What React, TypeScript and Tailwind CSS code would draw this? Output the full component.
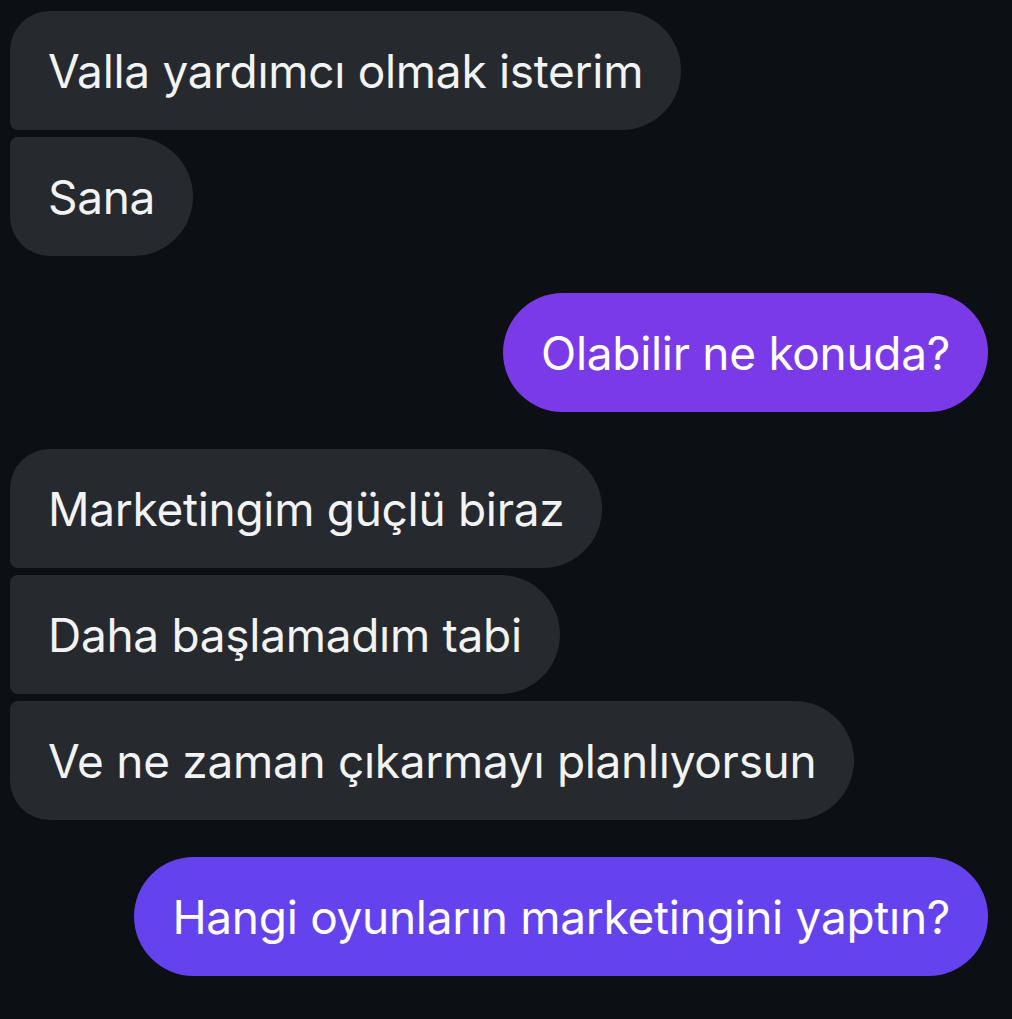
type Msg = { text: string; me?: boolean; shape?: string; color?: string };

const msgs: Msg[][] = [
  [
    { text: "Valla yardımcı olmak isterim", shape: "rounded-tl-[40px] rounded-bl-[8px]" },
    { text: "Sana", shape: "rounded-tl-[8px] rounded-bl-[40px]" },
  ],
  [{ text: "Olabilir ne konuda?", me: true, color: "bg-[#7a3ae8]" }],
  [
    { text: "Marketingim güçlü biraz", shape: "rounded-tl-[40px] rounded-bl-[8px]" },
    { text: "Daha başlamadım tabi", shape: "rounded-tl-[8px] rounded-bl-[8px]" },
    { text: "Ve ne zaman çıkarmayı planlıyorsun", shape: "rounded-tl-[8px] rounded-bl-[40px]" },
  ],
  [{ text: "Hangi oyunların marketingini yaptın?", me: true, color: "bg-[#6443ef]" }],
];

function Bubble({ m }: { m: Msg }) {
  if (m.me) {
    return (
      <div className={`flex h-[119px] items-center rounded-full px-[38px] text-white ${m.color}`}>
        {m.text}
      </div>
    );
  }
  return (
    <div
      className={`flex h-[119px] items-center rounded-r-[60px] bg-[#26292e] px-[38px] text-[#f2f3f5] ${m.shape}`}
    >
      {m.text}
    </div>
  );
}

export default function App() {
  return (
    <div
      className="min-h-[1019px] bg-[#0c0f13] pb-[43px] pl-[10px] pr-[24px] pt-[11px] text-[46px] leading-none tracking-[-0.3px]"
      style={{ fontFamily: "Inter, 'Noto Sans', sans-serif" }}
    >
      <div className="flex flex-col gap-[37px]">
        {msgs.map((group, i) => (
          <div key={i} className={`flex flex-col gap-[7px] ${group[0].me ? "items-end" : "items-start"}`}>
            {group.map((m, j) => (
              <Bubble key={j} m={m} />
            ))}
          </div>
        ))}
      </div>
    </div>
  );
}
